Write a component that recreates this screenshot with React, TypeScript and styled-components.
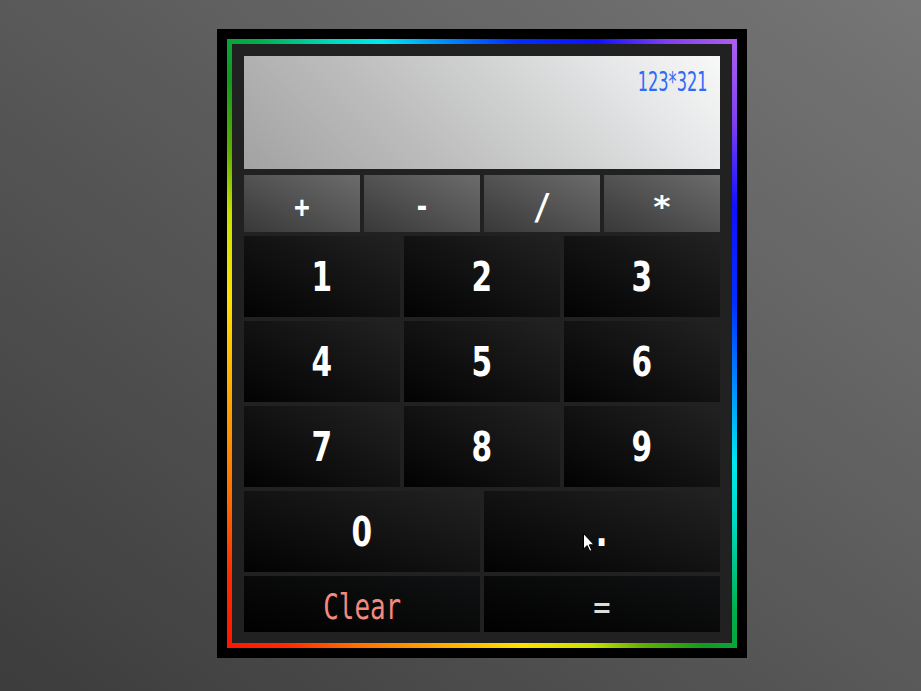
import styled, { createGlobalStyle } from 'styled-components';

const GlobalStyle = createGlobalStyle`
  html, body {
    margin: 0;
    height: 100%;
  }
  body {
    background: linear-gradient(to top right, #3c3c3c, #767676);
    font-family: 'DejaVu Sans', sans-serif;
  }
  #root {
    min-height: 100vh;
  }
`;

const digitKeys = ['1', '2', '3', '4', '5', '6', '7', '8', '9'];
const operators = ['+', '-', '/', '*'];

const Cursor = () =>
  <CursorSvg width="12" height="19" viewBox="0 0 12 19">
    <path d="M0.5 0.5 L0.5 16 L4.2 12.6 L6.8 18.3 L8.8 17.4 L6.3 11.8 L11 11.8 Z"
      fill="#fff" stroke="#000" strokeWidth="1" />
  </CursorSvg>;

export default function App() {
  return (
    <>
      <GlobalStyle />
      <Page>
        <Frame>
          <Rainbow>
            <Panel>
              <Display>
                <Glyph $scale={0.6} $origin="right">123*321</Glyph>
              </Display>
              <OperatorRow>
                {operators.map(op =>
                  <OperatorButton key={op} $tall={op === '/'}>
                    <Glyph $scale={op === '*' ? 1.1 : 0.85}>{op}</Glyph>
                  </OperatorButton>
                )}
              </OperatorRow>
              <KeyGrid>
                {digitKeys.map(d =>
                  <Key key={d} $span={2}>
                    <Glyph $scale={0.74}>{d}</Glyph>
                  </Key>
                )}
                <Key $span={3}>
                  <Glyph $scale={0.74}>0</Glyph>
                </Key>
                <Key $span={3}>
                  <Glyph $scale={0.8}>.</Glyph>
                  <Cursor />
                </Key>
                <ActionKey $span={3} $color="#f38b7c">
                  <MonoGlyph $scale={0.72}>Clear</MonoGlyph>
                </ActionKey>
                <ActionKey $span={3} $color="#dcdfd8">
                  <MonoGlyph $scale={0.8}>=</MonoGlyph>
                </ActionKey>
              </KeyGrid>
            </Panel>
          </Rainbow>
        </Frame>
      </Page>
    </>
  );
}

const Page = styled.div`
  display: flex;
  align-items: flex-start;
  padding: 29px 0 0 217px;
`;

const Frame = styled.div`
  background: #000;
  padding: 10px;
  width: 530px;
  box-sizing: border-box;
`;

const Rainbow = styled.div`
  padding: 5px;
  background: linear-gradient(to top right,
    #ff1400 0%,
    #ff2a00 6%,
    #ff7000 13%,
    #ffa000 20%,
    #ffe000 29%,
    #c8e000 36%,
    #60b000 41%,
    #109a20 47%,
    #00b050 53%,
    #00d8c0 60%,
    #00e8f0 65%,
    #0080ff 72%,
    #0030ff 78%,
    #1010ff 86%,
    #8040f0 93%,
    #b060f0 100%);
`;

const Panel = styled.div`
  display: flex;
  flex-direction: column;
  background: #212121;
  padding: 12px 12px 11px;
`;

const Display = styled.div`
  height: 113px;
  box-sizing: border-box;
  padding: 11px 12px;
  text-align: right;
  background: linear-gradient(45deg, #a2a2a2 0%, #bdbdbd 35%, #d2d3d3 60%, #e6e7e8 80%, #f8f8f8 100%);
  color: #2f6af7;
  font-size: 27px;
  line-height: 30px;
`;

const Glyph = styled.span<{ $scale: number; $origin?: string }>`
  display: inline-block;
  transform: scaleX(${p => p.$scale});
  transform-origin: ${p => p.$origin ?? 'center'};
`;

const MonoGlyph = styled(Glyph)`
  font-family: 'DejaVu Sans Mono', monospace;
`;

const OperatorRow = styled.div`
  display: grid;
  grid-template-columns: repeat(4, 1fr);
  gap: 4px;
  margin-top: 6px;
  height: 57px;
`;

const OperatorButton = styled.div<{ $tall: boolean }>`
  display: flex;
  align-items: center;
  justify-content: center;
  padding-top: 6px;
  box-sizing: border-box;
  background: linear-gradient(to top right, #383838, #6c6c6c);
  color: #fff;
  font-family: 'DejaVu Sans Mono', monospace;
  font-size: ${p => (p.$tall ? 36 : 30)}px;
  font-weight: bold;
`;

const KeyGrid = styled.div`
  display: grid;
  grid-template-columns: repeat(6, 1fr);
  grid-template-rows: 81px 81px 81px 81px 56px;
  gap: 4px;
  margin-top: 4px;
`;

const Key = styled.div<{ $span: number }>`
  position: relative;
  grid-column: span ${p => p.$span};
  display: flex;
  align-items: center;
  justify-content: center;
  background: linear-gradient(to top right, #020202, #222222);
  color: #fff;
  font-size: 40px;
  font-weight: bold;
`;

const ActionKey = styled(Key)<{ $color: string }>`
  background: linear-gradient(to top right, #000, #111213);
  color: ${p => p.$color};
  font-size: 36px;
  font-weight: normal;
  padding-top: 4px;
`;

const CursorSvg = styled.svg`
  position: absolute;
  left: 99px;
  top: 42px;
`;
